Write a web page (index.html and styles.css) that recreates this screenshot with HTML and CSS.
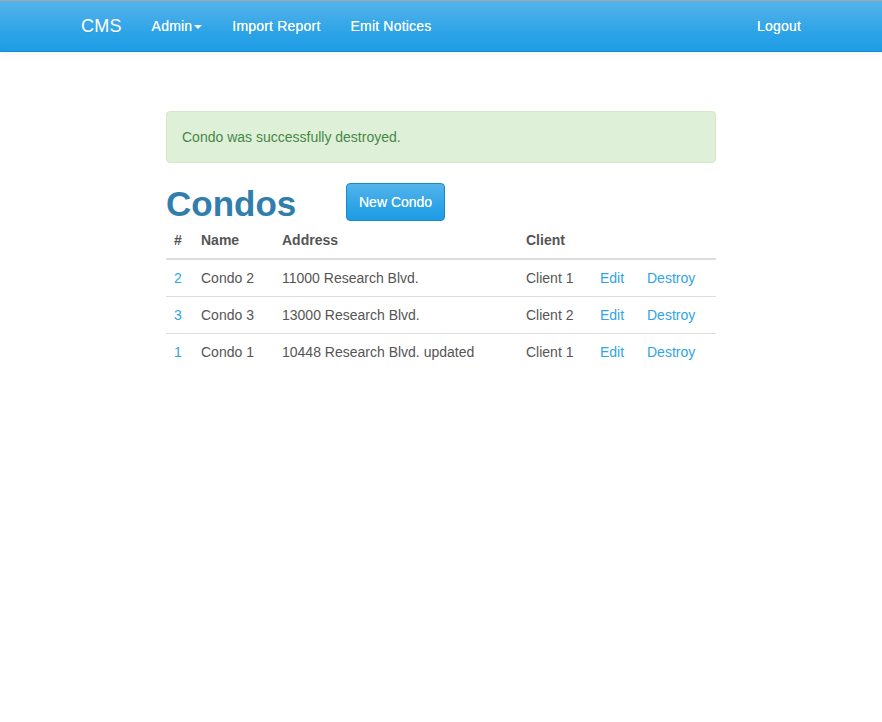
FILE: index.html
```html
<!DOCTYPE html>
<html>
<head>
<meta charset="utf-8">
<title>CMS</title>
<link rel="stylesheet" href="styles.css">
</head>
<body>
<nav class="navbar">
  <div class="container nav-inner">
    <a class="brand" href="#">CMS</a>
    <ul class="nav">
      <li><a href="#">Admin<span class="caret"></span></a></li>
      <li><a href="#">Import Report</a></li>
      <li><a href="#">Emit Notices</a></li>
    </ul>
    <ul class="nav nav-right">
      <li><a href="#">Logout</a></li>
    </ul>
  </div>
</nav>
<main class="content">
  <div class="alert">Condo was successfully destroyed.</div>
  <div class="title-row">
    <h1 class="title">Condos</h1>
    <a class="btn" href="#">New Condo</a>
  </div>
  <table class="table">
    <thead>
      <tr>
        <th class="c-id">#</th>
        <th class="c-name">Name</th>
        <th class="c-addr">Address</th>
        <th class="c-client">Client</th>
        <th class="c-edit"></th>
        <th class="c-destroy"></th>
      </tr>
    </thead>
    <tbody>
      <tr>
        <td><a href="#">2</a></td>
        <td>Condo 2</td>
        <td>11000 Research Blvd.</td>
        <td>Client 1</td>
        <td><a href="#">Edit</a></td>
        <td><a href="#">Destroy</a></td>
      </tr>
      <tr>
        <td><a href="#">3</a></td>
        <td>Condo 3</td>
        <td>13000 Research Blvd.</td>
        <td>Client 2</td>
        <td><a href="#">Edit</a></td>
        <td><a href="#">Destroy</a></td>
      </tr>
      <tr>
        <td><a href="#">1</a></td>
        <td>Condo 1</td>
        <td>10448 Research Blvd. updated</td>
        <td>Client 1</td>
        <td><a href="#">Edit</a></td>
        <td><a href="#">Destroy</a></td>
      </tr>
    </tbody>
  </table>
</main>
</body>
</html>
```
FILE: styles.css
```css
* { box-sizing: border-box; }
html, body { margin: 0; padding: 0; }
body {
  font-family: "Liberation Sans", Arial, Helvetica, sans-serif;
  font-size: 14px;
  line-height: 20px;
  color: #555555;
  background: #ffffff;
}
a { color: #2fa4e7; text-decoration: none; }

.navbar {
  height: 52px;
  border-top: 1px solid #a6a6a6;
  border-bottom: 1px solid #178acc;
  background-image: linear-gradient(#54b4eb, #2fa4e7 60%, #1d9ce5);
  box-shadow: 0 1px 6px rgba(0, 0, 0, 0.08);
}
.container {
  width: 750px;
  margin: 0 auto;
  padding: 0 15px;
}
.nav-inner {
  display: flex;
  align-items: center;
  height: 50px;
}
.brand {
  color: #fff;
  font-size: 18px;
  line-height: 20px;
  padding: 15px 15px 15px 0;
  letter-spacing: 0.2px;
  text-shadow: 0 1px 0 rgba(0,0,0,0.05);
}
.nav {
  list-style: none;
  margin: 0;
  padding: 0;
  display: flex;
}
.nav a {
  display: block;
  color: #fff;
  padding: 15px;
  line-height: 20px;
  letter-spacing: 0.2px;
  text-shadow: 0 0 0.5px rgba(255,255,255,0.8);
}
.nav-right { margin-left: auto; }
.nav-right a { padding-right: 0; }
.caret {
  display: inline-block;
  width: 0;
  height: 0;
  margin-left: 2px;
  vertical-align: middle;
  border-top: 4px solid #fff;
  border-left: 4px solid transparent;
  border-right: 4px solid transparent;
}

.content {
  width: 550px;
  margin: 59px auto 0;
  padding: 0;
}
.alert {
  background: #dff0d8;
  border: 1px solid #d6e9c6;
  color: #468847;
  border-radius: 4px;
  padding: 15px;
  margin-bottom: 20px;
}
.title-row {
  display: flex;
  align-items: center;
  height: 38px;
}
.title {
  width: 180px;
  margin: 0;
  font-size: 35px;
  line-height: 38px;
  font-weight: 700;
  color: #317eac;
  position: relative;
  top: 2px;
}
.btn {
  display: inline-block;
  color: #fff;
  padding: 8px 12px;
  line-height: 20px;
  border: 1px solid #178acc;
  border-radius: 4px;
  background-image: linear-gradient(#54b4eb, #2fa4e7 60%, #1d9ce5);
  text-shadow: 0 0 0.5px rgba(255,255,255,0.8);
}

.table {
  width: 100%;
  margin-top: 1px;
  border-collapse: collapse;
  border-spacing: 0;
}
.table th, .table td {
  padding: 8px 8px;
  line-height: 20px;
  text-align: left;
  vertical-align: top;
}
.table th {
  font-weight: 700;
  border-bottom: 2px solid #dddddd;
}
.table tbody tr + tr td {
  border-top: 1px solid #dddddd;
}
.c-id { width: 27px; }
.c-name { width: 81px; }
.c-addr { width: 244px; }
.c-client { width: 74px; }
.c-edit { width: 47px; }
.c-destroy { width: 77px; }
```
